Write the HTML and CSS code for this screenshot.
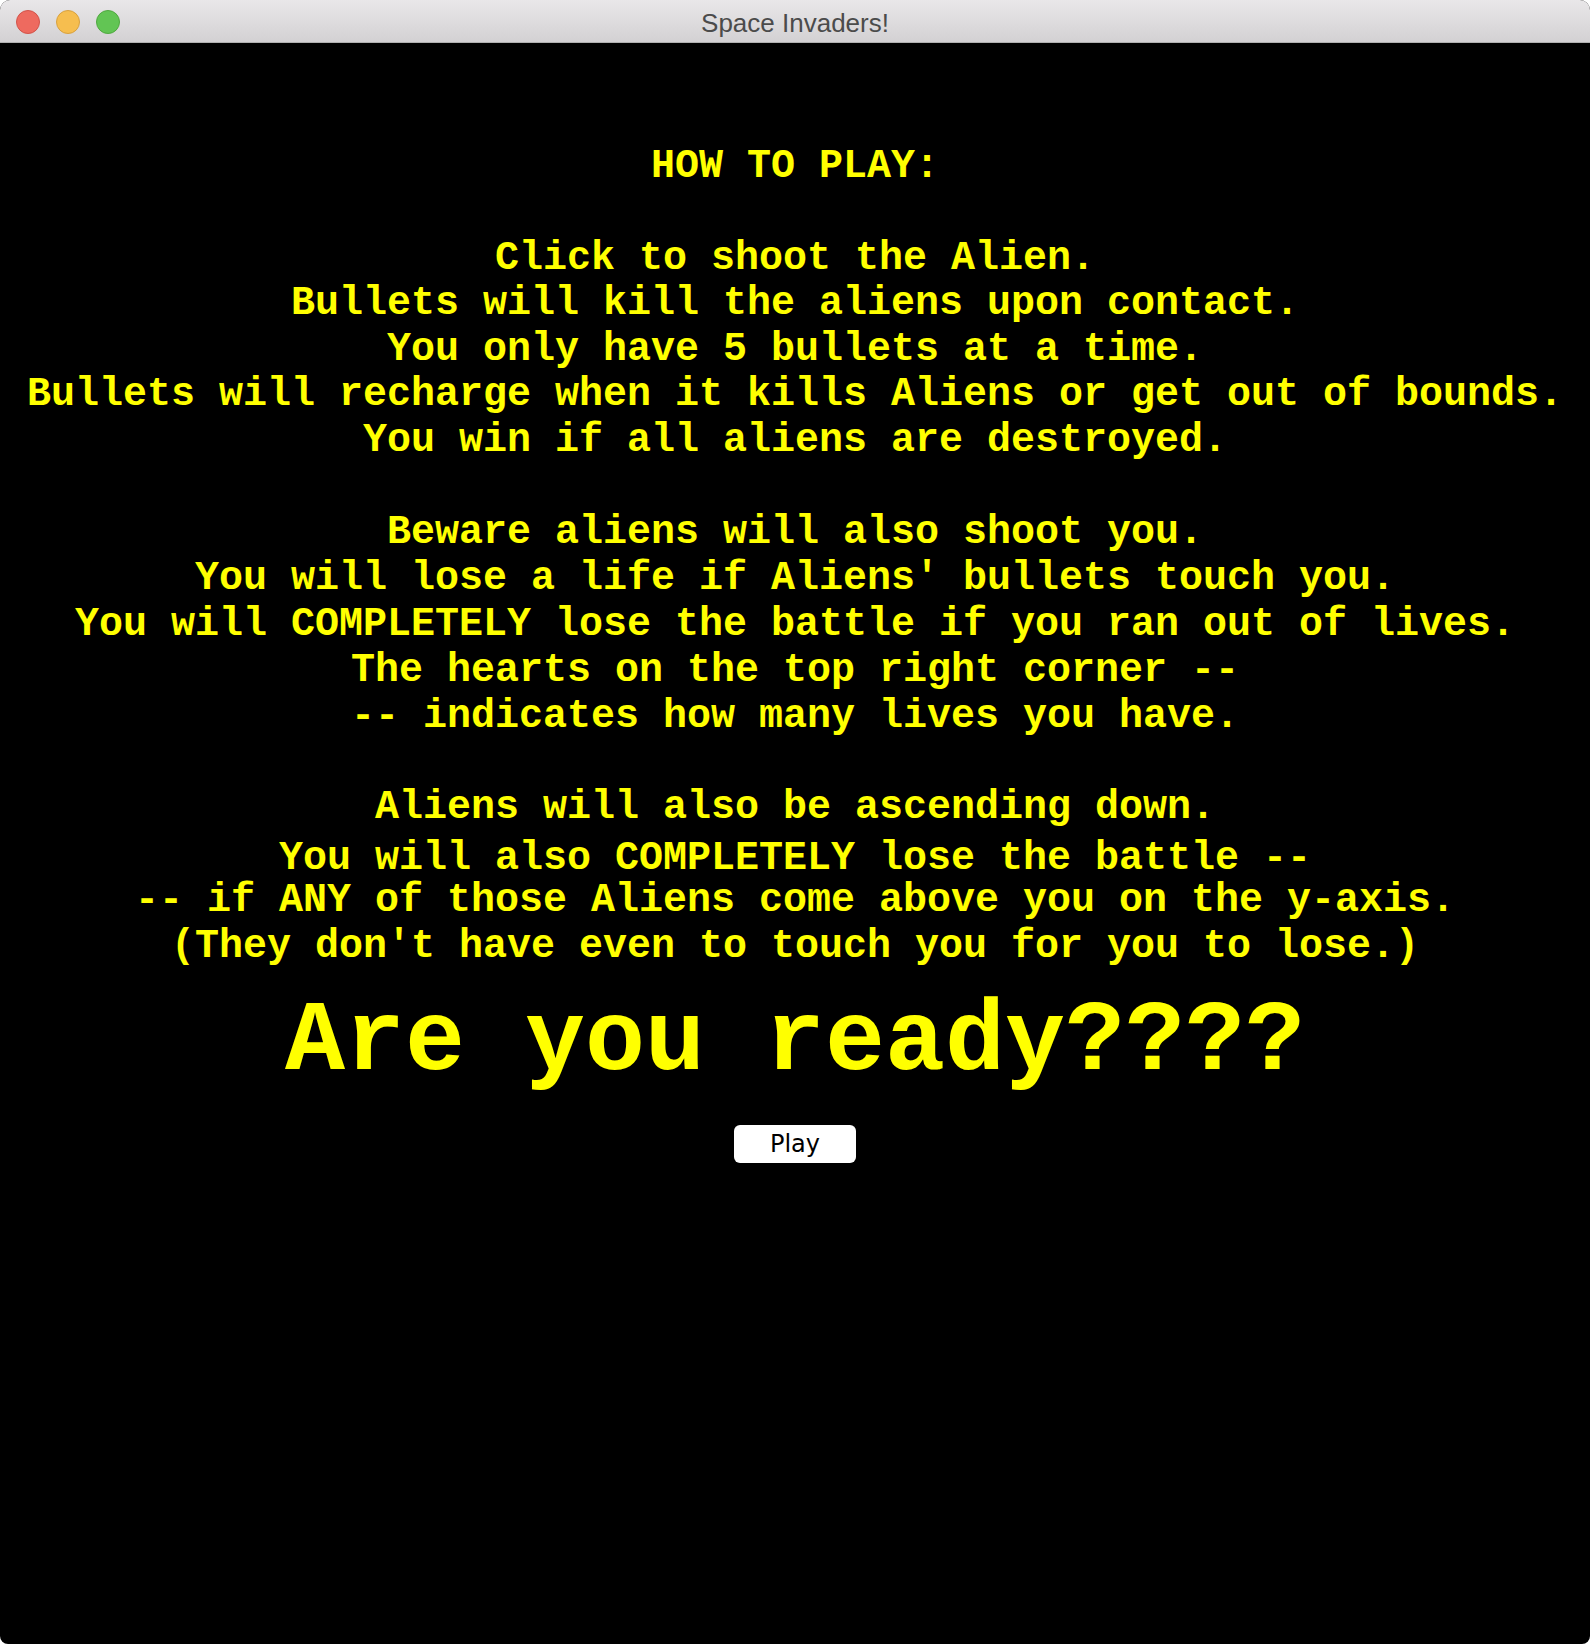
FILE: index.html
```html
<!DOCTYPE html>
<html lang="en">
<head>
<meta charset="utf-8">
<title>Space Invaders!</title>
<link rel="stylesheet" href="styles.css">
</head>
<body>
<div class="window">
  <header class="titlebar">
    <div class="lights">
      <span class="light red"></span>
      <span class="light yellow"></span>
      <span class="light green"></span>
    </div>
    <div class="title">Space Invaders!</div>
    <div class="spacer"></div>
  </header>
  <main class="screen">
    <h1 class="heading">HOW TO PLAY:</h1>
    <div class="block block-a">
      <p>Click to shoot the Alien.</p>
      <p>Bullets will kill the aliens upon contact.</p>
      <p>You only have 5 bullets at a time.</p>
      <p>Bullets will recharge when it kills Aliens or get out of bounds.</p>
      <p>You win if all aliens are destroyed.</p>
    </div>
    <div class="block block-b">
      <p>Beware aliens will also shoot you.</p>
      <p>You will lose a life if Aliens' bullets touch you.</p>
      <p>You will COMPLETELY lose the battle if you ran out of lives.</p>
      <p>The hearts on the top right corner --</p>
      <p>-- indicates how many lives you have.</p>
    </div>
    <div class="block block-c">
      <p>Aliens will also be ascending down.</p>
      <p class="c2">You will also COMPLETELY lose the battle --</p>
      <p class="c3">-- if ANY of those Aliens come above you on the y-axis.</p>
      <p class="c4">(They don't have even to touch you for you to lose.)</p>
    </div>
    <div class="ready">Are you ready????</div>
    <button class="play" type="button">Play</button>
  </main>
</div>
</body>
</html>
```

FILE: styles.css
```css
html, body {
  margin: 0;
  padding: 0;
  background: #ffffff;
}

.window {
  width: 1590px;
  height: 1644px;
  display: flex;
  flex-direction: column;
  border-radius: 10px 10px 8px 8px;
  overflow: hidden;
  background: #000000;
}

.titlebar {
  height: 42px;
  flex: 0 0 42px;
  border-bottom: 1px solid #b1b1b1;
  background: linear-gradient(#e9e7e9, #d3d1d3);
  display: grid;
  grid-template-columns: 1fr auto 1fr;
  align-items: start;
}

.lights {
  display: flex;
  gap: 16px;
  padding-left: 16px;
  padding-top: 10px;
}

.light {
  width: 24px;
  height: 24px;
  border-radius: 50%;
  box-sizing: border-box;
}

.red { background: #ee6a5f; border: 1px solid #d2534a; }
.yellow { background: #f6be4f; border: 1px solid #d8a13f; }
.green { background: #62c554; border: 1px solid #50a840; }

.title {
  font-family: "Liberation Sans", Arial, sans-serif;
  font-size: 26px;
  line-height: 42px;
  margin-top: 2px;
  color: #4b4b4b;
}

.screen {
  flex: 1;
  padding-top: 100.6px;
  text-align: center;
  color: #ffff00;
  font-family: "Liberation Mono", "Courier New", monospace;
  font-weight: bold;
  font-size: 40px;
}

.heading {
  margin: 0;
  font-size: 40px;
  font-weight: bold;
  line-height: 45.4px;
}

.block p {
  margin: 0;
  white-space: pre;
}

.block-a {
  margin-top: 47px;
  line-height: 45.4px;
}

.block-b {
  margin-top: 46.5px;
  line-height: 46.1px;
}

.block-c {
  margin-top: 44.8px;
  line-height: 46px;
}

.block-c .c2 { margin-top: 5.5px; }
.block-c .c3 { margin-top: -4px; }
.block-c .c4 { margin-top: -0.5px; }

.ready {
  margin-top: 16.5px;
  font-size: 100px;
  line-height: 113px;
}

.play {
  display: block;
  margin: 26px auto 0;
  width: 122px;
  height: 38px;
  padding: 0;
  border: none;
  border-radius: 6px;
  background: #ffffff;
  color: #000000;
  font-family: "DejaVu Sans", "Lucida Grande", sans-serif;
  font-weight: normal;
  font-size: 24px;
  line-height: 38px;
}
```
